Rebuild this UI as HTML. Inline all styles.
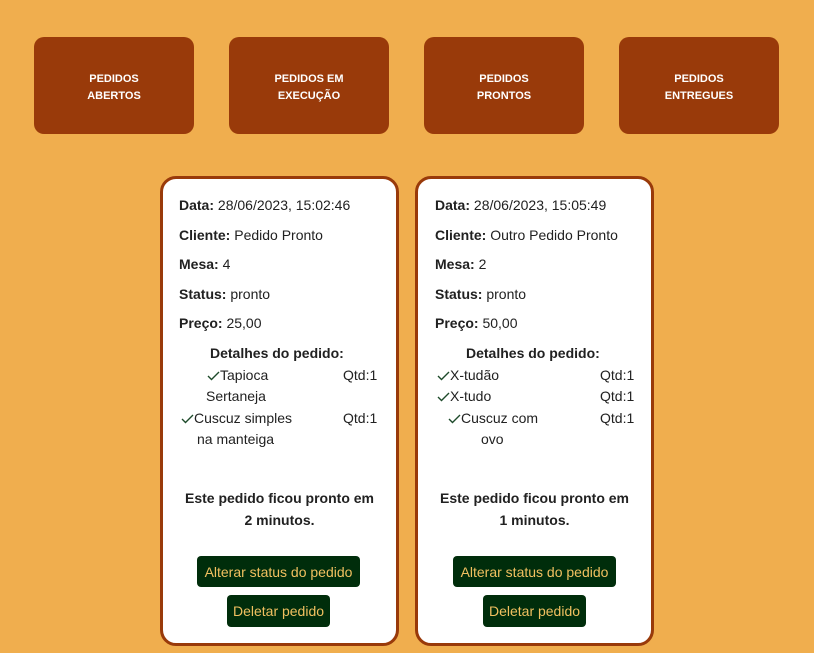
<!DOCTYPE html>
<html><head><meta charset="utf-8"><style>
*{margin:0;padding:0;box-sizing:border-box}
body{width:814px;height:653px;background:#f0ae4e;font-family:"Liberation Sans",Arial,sans-serif;position:relative;overflow:hidden;color:#212121}
.tb{position:absolute;top:37px;width:160px;height:97px;background:#993a0a;border-radius:10px;color:#fff;font-weight:bold;font-size:11px;line-height:17px;display:flex;align-items:center;justify-content:center;text-align:center;padding-top:4px}
.card{position:absolute;top:176px;width:239px;height:470px;background:#fff;border:3px solid #993a0a;border-radius:16px}
.t{position:absolute;font-size:14px;white-space:nowrap;line-height:16px}
.c{position:absolute;width:100%;text-align:center;font-size:14px;font-weight:bold;line-height:22px}
.btn{position:absolute;background:#002d0b;color:#f0c060;font-size:14px;border-radius:4px;display:flex;align-items:center;justify-content:center}
svg{position:absolute}
</style></head><body>
<div class="tb" style="left:34px">PEDIDOS<br>ABERTOS</div>
<div class="tb" style="left:229px">PEDIDOS EM<br>EXECUÇÃO</div>
<div class="tb" style="left:424px">PEDIDOS<br>PRONTOS</div>
<div class="tb" style="left:619px">PEDIDOS<br>ENTREGUES</div>

<div class="card" style="left:160px">
<div class="t" style="left:16px;top:18px"><b>Data:</b> 28/06/2023, 15:02:46</div>
<div class="t" style="left:16px;top:48px"><b>Cliente:</b> Pedido Pronto</div>
<div class="t" style="left:16px;top:77px"><b>Mesa:</b> 4</div>
<div class="t" style="left:16px;top:107px"><b>Status:</b> pronto</div>
<div class="t" style="left:16px;top:136px"><b>Preço:</b> 25,00</div>
<div class="t" style="left:47px;top:166px"><b>Detalhes do pedido:</b></div>
<svg style="left:44px;top:192px" width="13" height="10" viewBox="0 0 13 10"><path d="M1 5 L4.5 8.5 L12 1" stroke="#1d4a2a" stroke-width="1.4" fill="none"/></svg>
<div class="t" style="left:57px;top:188px">Tapioca</div>
<div class="t" style="left:43px;top:209px">Sertaneja</div>
<svg style="left:18px;top:235px" width="13" height="10" viewBox="0 0 13 10"><path d="M1 5 L4.5 8.5 L12 1" stroke="#1d4a2a" stroke-width="1.4" fill="none"/></svg>
<div class="t" style="left:31px;top:231px">Cuscuz simples</div>
<div class="t" style="left:34px;top:252px">na manteiga</div>
<div class="t" style="left:180px;top:188px">Qtd:1</div>
<div class="t" style="left:180px;top:231px">Qtd:1</div>
<div class="c" style="top:308px">Este pedido ficou pronto em<br>2 minutos.</div>
<div class="btn" style="left:34px;top:377px;width:163px;height:31px">Alterar status do pedido</div>
<div class="btn" style="left:64px;top:416px;width:103px;height:32px">Deletar pedido</div>
</div>

<div class="card" style="left:415px">
<div class="t" style="left:17px;top:18px"><b>Data:</b> 28/06/2023, 15:05:49</div>
<div class="t" style="left:17px;top:48px"><b>Cliente:</b> Outro Pedido Pronto</div>
<div class="t" style="left:17px;top:77px"><b>Mesa:</b> 2</div>
<div class="t" style="left:17px;top:107px"><b>Status:</b> pronto</div>
<div class="t" style="left:17px;top:136px"><b>Preço:</b> 50,00</div>
<div class="t" style="left:48px;top:166px"><b>Detalhes do pedido:</b></div>
<svg style="left:19px;top:192px" width="13" height="10" viewBox="0 0 13 10"><path d="M1 5 L4.5 8.5 L12 1" stroke="#1d4a2a" stroke-width="1.4" fill="none"/></svg>
<div class="t" style="left:32px;top:188px">X-tudão</div>
<svg style="left:19px;top:213px" width="13" height="10" viewBox="0 0 13 10"><path d="M1 5 L4.5 8.5 L12 1" stroke="#1d4a2a" stroke-width="1.4" fill="none"/></svg>
<div class="t" style="left:32px;top:209px">X-tudo</div>
<svg style="left:30px;top:235px" width="13" height="10" viewBox="0 0 13 10"><path d="M1 5 L4.5 8.5 L12 1" stroke="#1d4a2a" stroke-width="1.4" fill="none"/></svg>
<div class="t" style="left:43px;top:231px">Cuscuz com</div>
<div class="t" style="left:63px;top:252px">ovo</div>
<div class="t" style="left:182px;top:188px">Qtd:1</div>
<div class="t" style="left:182px;top:209px">Qtd:1</div>
<div class="t" style="left:182px;top:231px">Qtd:1</div>
<div class="c" style="top:308px">Este pedido ficou pronto em<br>1 minutos.</div>
<div class="btn" style="left:35px;top:377px;width:163px;height:31px">Alterar status do pedido</div>
<div class="btn" style="left:65px;top:416px;width:103px;height:32px">Deletar pedido</div>
</div>
</body></html>
